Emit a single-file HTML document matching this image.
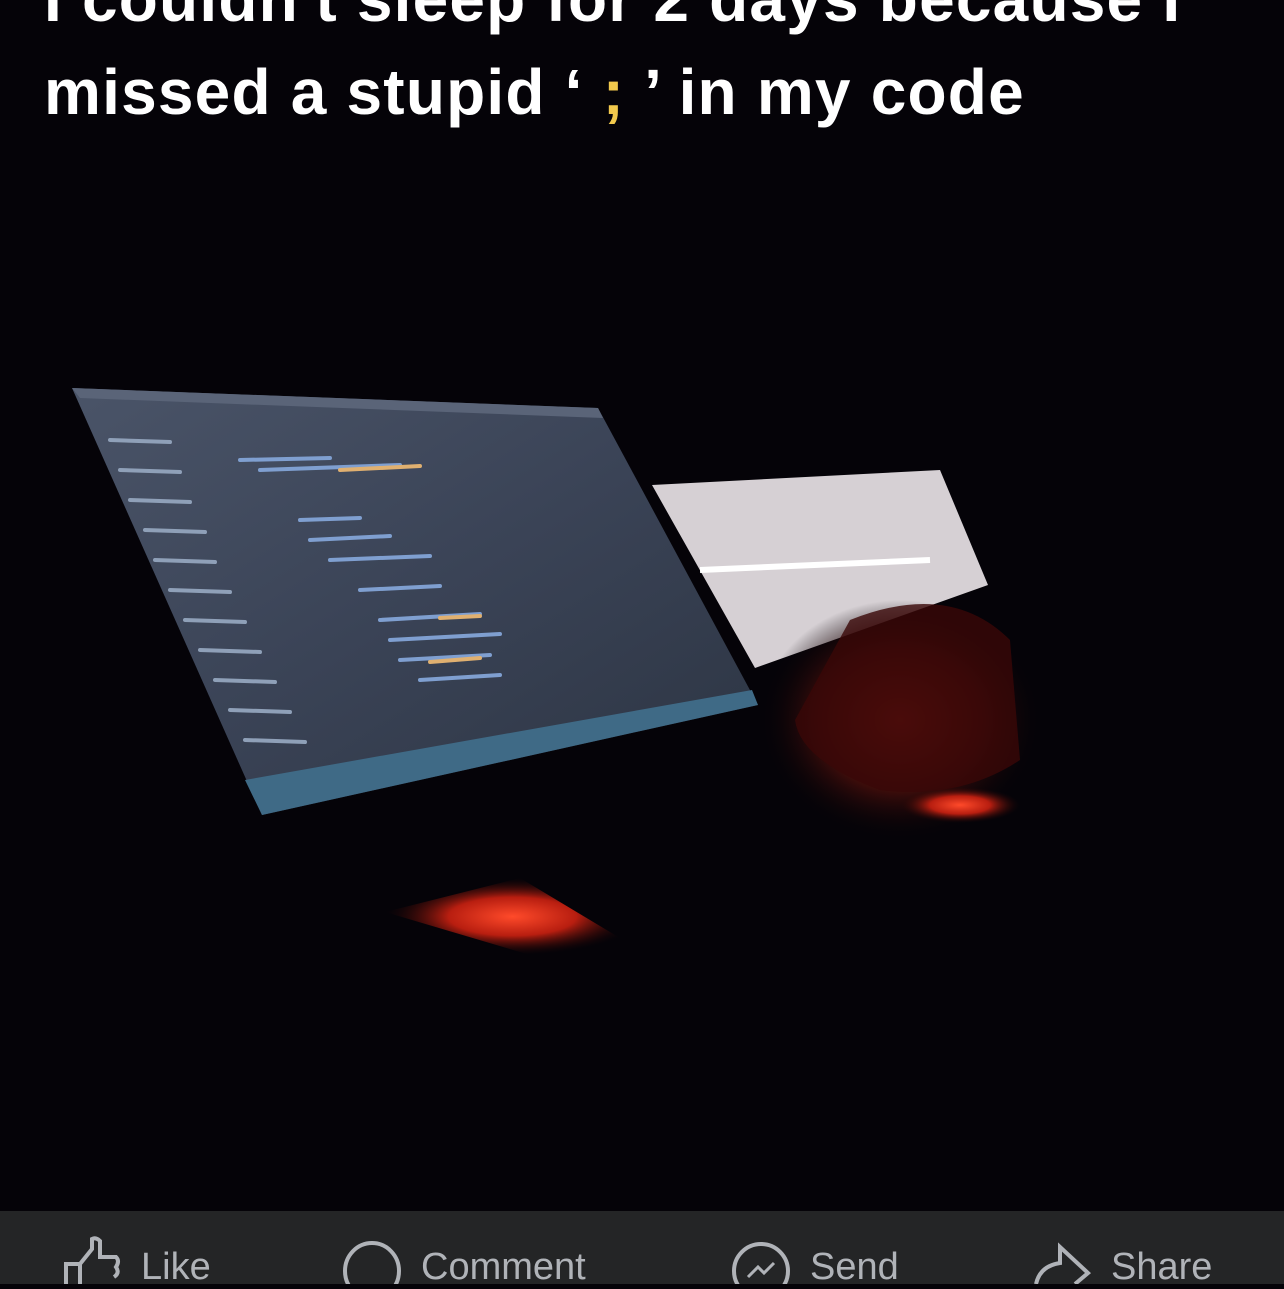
<!DOCTYPE html>
<html><head><style>
html,body{margin:0;padding:0;width:1284px;height:1284px;overflow:hidden;background:#050308;}
.t{position:absolute;left:44px;color:#fff;font-family:"Liberation Sans",sans-serif;font-weight:bold;font-size:64px;white-space:nowrap;letter-spacing:1.2px;}
.bar{position:absolute;left:0;top:1211px;width:1284px;height:73px;background:#242526;}
.b{position:absolute;top:1246px;color:#b0b3b8;font-family:"Liberation Sans",sans-serif;font-size:38px;white-space:nowrap;}
</style></head><body>
<svg width="1284" height="1211" style="position:absolute;left:0;top:0">
<defs>
<linearGradient id="mon" x1="0" y1="0" x2="1" y2="1">
<stop offset="0" stop-color="#4a5468"/><stop offset="0.5" stop-color="#3a4356"/><stop offset="1" stop-color="#2c3442"/></linearGradient>
<radialGradient id="red" cx="0.5" cy="0.5" r="0.5"><stop offset="0" stop-color="#8a1e16"/><stop offset="0.6" stop-color="#3a0c0a"/><stop offset="1" stop-color="#050308" stop-opacity="0"/></radialGradient>
<radialGradient id="kb" cx="0.5" cy="0.5" r="0.5"><stop offset="0" stop-color="#ff4a2a"/><stop offset="0.5" stop-color="#b81e10"/><stop offset="1" stop-color="#200505" stop-opacity="0"/></radialGradient>
</defs>
<rect width="1284" height="1211" fill="#050308"/>
<polygon points="652,485 940,470 988,585 755,668" fill="#d6d0d4"/>
<line x1="700" y1="570" x2="930" y2="560" stroke="#fff" stroke-width="6"/>
<polygon points="72,388 598,408 758,705 262,815" fill="url(#mon)"/>
<polygon points="72,388 598,408 603,418 80,398" fill="#5a6478"/>
<polygon points="245,780 752,690 758,705 262,815" fill="#3f6a86"/>
<g stroke-width="4" stroke-linecap="round">
<path d="M110,440 L170,442 M120,470 L180,472 M130,500 L190,502 M145,530 L205,532 M155,560 L215,562 M170,590 L230,592 M185,620 L245,622 M200,650 L260,652 M215,680 L275,682 M230,710 L290,712 M245,740 L305,742" stroke="#8fa0b8"/>
<path d="M240,460 L330,458 M260,470 L400,465 M300,520 L360,518 M310,540 L390,536 M330,560 L430,556 M360,590 L440,586 M380,620 L480,614 M390,640 L500,634 M400,660 L490,655 M420,680 L500,675" stroke="#7f9fd0"/>
<path d="M340,470 L420,466 M440,618 L480,616 M430,662 L480,658" stroke="#e0b070"/>
</g>
<ellipse cx="900" cy="720" rx="140" ry="120" fill="url(#red)"/>
<path d="M850,620 Q950,580 1010,640 L1020,760 Q960,800 880,790 Q800,760 795,720 Z" fill="#3a0808" opacity="0.8"/>
<ellipse cx="960" cy="805" rx="60" ry="18" fill="url(#kb)"/>
<polygon points="385,912 520,878 640,950 530,955" fill="url(#kb)"/>
</svg>
<div class="t" style="top:-38px">I couldn't sleep for 2 days because I</div>
<div class="t" style="top:55px">missed a stupid ‘ <span style="color:#f2c94c">;</span> ’  in my code</div>
<div class="bar"></div>
<svg width="1284" height="73" style="position:absolute;left:0;top:1211px" fill="none" stroke="#b0b3b8" stroke-width="4">
<path d="M66,73 L66,53 L80,53 L80,73 M80,53 L92,38 L92,28 Q96,26 100,30 L100,46 L116,46 Q120,50 116,56 Q120,62 114,66"/>
<ellipse cx="372" cy="60" rx="27" ry="28"/>
<circle cx="761" cy="60" r="27"/>
<path d="M748,66 L758,56 L764,62 L774,52" stroke-width="3"/>
<path d="M1036,73 Q1040,55 1060,52 L1060,36 L1088,62 L1075,73"/>
</svg>
<div class="b" style="left:141px">Like</div>
<div class="b" style="left:421px">Comment</div>
<div class="b" style="left:810px">Send</div>
<div class="b" style="left:1111px">Share</div>
</body></html>
